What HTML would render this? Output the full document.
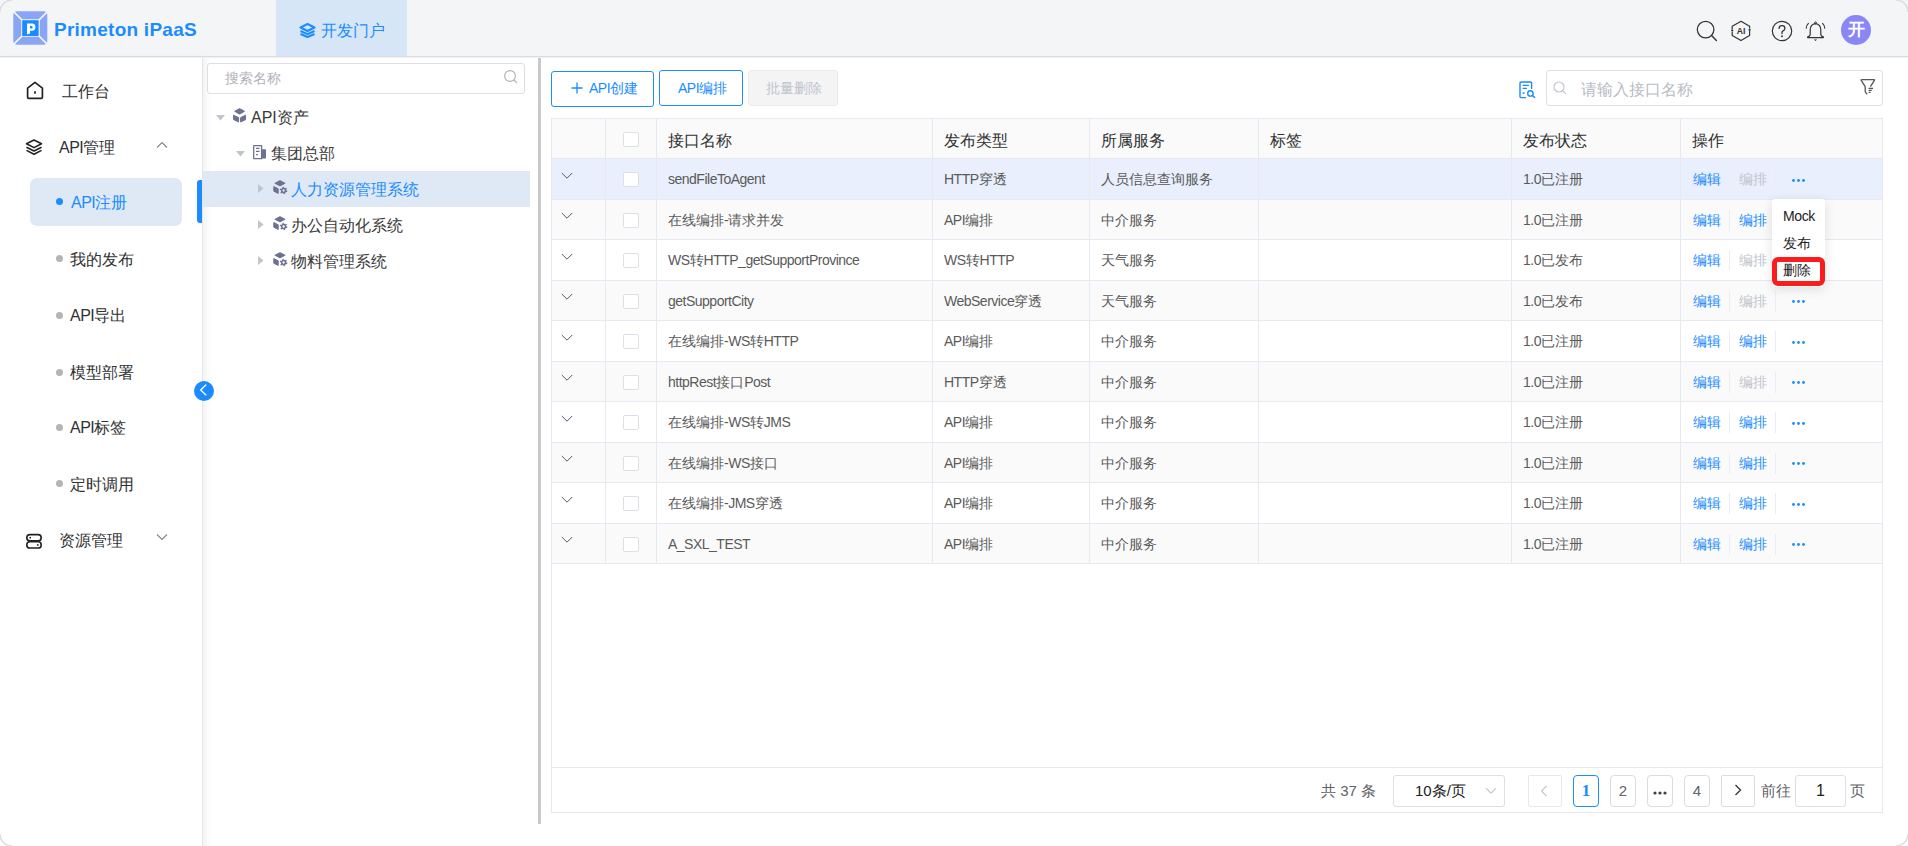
<!DOCTYPE html>
<html><head><meta charset="utf-8">
<style>
*{box-sizing:border-box;margin:0;padding:0}
html,body{width:1908px;height:846px;overflow:hidden;background:#fff}
body{font-family:"Liberation Sans",sans-serif;color:#333;position:relative}
.win{position:absolute;left:0;top:0;width:1908px;height:846px;background:#fff;overflow:hidden}
.winb{position:absolute;left:0;top:0;width:1908px;height:846px;border-radius:12px;border:1px solid #dedede;pointer-events:none}
.abs{position:absolute}
.t{position:absolute;white-space:nowrap;line-height:20px}
.hdr{position:absolute;left:0;top:0;width:1908px;height:57px;background:#f4f5f7;border-bottom:1px solid #dcdde0}
.brand{left:54px;top:20px;font-size:19px;font-weight:bold;color:#1a8cff;letter-spacing:0.25px;line-height:20px}
.tab{left:276px;top:0;width:131px;height:56px;background:#d6e6f7}
.side{left:0;top:57px;width:203px;height:789px;background:#fff;border-right:1px solid #e4e4e4;box-shadow:2px 0 5px rgba(0,0,0,0.04)}
.m16{font-size:16px;color:#303133}
.s15{font-size:16px;color:#303133}
.dot{position:absolute;width:7px;height:7px;border-radius:50%;background:#b4b4b4}
.tree{left:203px;top:57px;width:334px;height:789px;background:#fff}
.split{left:538px;top:58px;width:3px;height:766px;background:#c9c9c9}
.inp{position:absolute;border:1px solid #dcdfe6;border-radius:3px;background:#fff}
.ph{color:#b0b3b9}
.btn{position:absolute;border:1px solid #1a8cff;border-radius:3px;color:#1a8cff;font-size:14px;text-align:center;background:#fff}
.tbl{position:absolute;left:551px;top:118px;width:1332px;height:695px;border:1px solid #e6e9f2}
.row{position:absolute;left:552px;width:1330px;border-top:1px solid #e6e9f2}
.vl{position:absolute;width:1px;background:#e6e9f2}
.cell{position:absolute;white-space:nowrap;font-size:14px;color:#5a5a5a;line-height:20px}
.hd{position:absolute;white-space:nowrap;font-size:16px;color:#303133;line-height:20px}
.cb{position:absolute;left:623px;width:16px;height:15px;border:1px solid #dcdfe6;border-radius:2px;background:#fff}
.chev{position:absolute;left:561px}
.lk{position:absolute;white-space:nowrap;font-size:14px;color:#1a8cff;line-height:20px}
.lkd{color:#c0c4cc}
.sep{position:absolute;width:1px;height:21px;background:#ebedf2}
.dots{position:absolute;left:1792px;width:13px;height:3px}
.pg{position:absolute;border:1px solid #dcdcdc;border-radius:4px;background:#fff;font-size:15px;color:#606266;text-align:center}
.n{letter-spacing:-0.5px}
</style></head>
<body>
<div class="win">
  <div class="hdr"></div>
  <svg class="abs" style="left:13px;top:11px" width="35" height="34" viewBox="0 0 35 34">
    <rect x="0.3" y="0.3" width="34" height="33.4" rx="4" fill="#8aa5f5"/>
    <path d="M0 0 L10 10 M35 0 L25 10 M0 34 L10 24 M35 34 L25 24" stroke="#f4f5f7" stroke-width="1.7"/>
    <rect x="8.2" y="8.2" width="18.6" height="17.6" fill="#f4f5f7"/>
    <rect x="9.2" y="9.2" width="16.4" height="15.8" fill="#1a8cff"/>
    <path d="M14 23.4 V12.4 H19.2 Q22.4 12.4 22.4 16.1 Q22.4 19.8 19.2 19.8 H17 V22.4 Z M17 15 V17.4 H18.6 Q19.6 17.4 19.6 16.2 Q19.6 15 18.6 15 Z" fill="#fff"/>
  </svg>
  <div class="t brand">Primeton iPaaS</div>
  <div class="abs tab"></div>
  <svg class="abs" style="left:299px;top:23px" width="17" height="15" viewBox="0 0 17 15">
    <path d="M8.5 1 L15.5 4.5 L8.5 8 L1.5 4.5 Z" fill="none" stroke="#1a8cff" stroke-width="2" stroke-linejoin="round"/>
    <path d="M1.5 8 L8.5 11.2 L15.5 8" fill="none" stroke="#1a8cff" stroke-width="2" stroke-linejoin="round"/>
    <path d="M1.5 11 L8.5 14 L15.5 11" fill="none" stroke="#1a8cff" stroke-width="2" stroke-linejoin="round"/>
  </svg>
  <div class="t" style="left:321px;top:21px;font-size:16px;color:#1a8cff">开发门户</div>

  <!-- header right icons -->
  <svg class="abs" style="left:1695px;top:19px" width="24" height="24" viewBox="0 0 24 24">
    <circle cx="10.6" cy="10.6" r="8.3" fill="none" stroke="#333" stroke-width="1.25"/>
    <path d="M16.6 16.6 L21.4 21.4" stroke="#333" stroke-width="1.4" stroke-linecap="round"/>
  </svg>
  <svg class="abs" style="left:1730px;top:20px" width="22" height="22" viewBox="0 0 22 22">
    <path d="M2.2 12 V15.6 L11 20.6 L19.6 15.6 V11 M19.6 8.6 V6.3 L11 1.3 L2.2 6.3 V9.4" fill="none" stroke="#333" stroke-width="1.2" stroke-linejoin="round"/>
    <circle cx="2.2" cy="10.6" r="1.1" fill="#333"/><circle cx="19.6" cy="9.8" r="1.1" fill="#333"/>
    <text x="11" y="14" font-size="8.6" font-weight="bold" fill="#333" text-anchor="middle" font-family="Liberation Sans">AI</text>
  </svg>
  <svg class="abs" style="left:1771px;top:20px" width="22" height="22" viewBox="0 0 22 22">
    <circle cx="11" cy="11" r="9.7" fill="none" stroke="#333" stroke-width="1.2"/>
    <path d="M8.1 8.4 Q8.1 5.6 11 5.6 Q13.9 5.6 13.9 8.3 Q13.9 10.1 12 10.9 Q11 11.4 11 12.8 V13.6" fill="none" stroke="#333" stroke-width="1.3" stroke-linecap="round"/>
    <circle cx="11" cy="16.2" r="0.95" fill="#333"/>
  </svg>
  <svg class="abs" style="left:1804px;top:20px" width="23" height="23" viewBox="0 0 23 23">
    <circle cx="11.5" cy="2.8" r="0.9" fill="none" stroke="#333" stroke-width="1"/>
    <path d="M11.5 3.6 Q16.8 4.2 16.8 10.2 V14.6 Q17 16.2 19.2 16.8 Q19.6 17 19.4 17.6 H3.6 Q3.4 17 3.8 16.8 Q6 16.2 6.2 14.6 V10.2 Q6.2 4.2 11.5 3.6 Z" fill="none" stroke="#333" stroke-width="1.2" stroke-linejoin="round"/>
    <path d="M9.9 19.4 H13.1 L11.5 20.9 Z" fill="#333"/>
    <path d="M4.4 3.4 Q2.2 5.6 2.2 8.2" fill="none" stroke="#333" stroke-width="1.1" stroke-linecap="round"/>
    <path d="M18.6 3.4 Q20.8 5.6 20.8 8.2" fill="none" stroke="#333" stroke-width="1.1" stroke-linecap="round"/>
  </svg>
  <div class="abs" style="left:1841px;top:15px;width:30px;height:30px;border-radius:50%;background:#8a86f5"></div>
  <div class="t" style="left:1841px;top:20px;width:30px;text-align:center;font-size:17px;font-weight:bold;color:#fff">开</div>

  <!-- sidebar -->
  <div class="abs side"></div>
  
  <svg class="abs" style="left:26px;top:81px" width="18" height="19" viewBox="0 0 18 19">
    <path d="M1.6 7.2 L9 1.4 L16.4 7.2 V16.2 Q16.4 17.4 15.2 17.4 H2.8 Q1.6 17.4 1.6 16.2 Z" fill="none" stroke="#222" stroke-width="1.7" stroke-linejoin="round"/>
    <path d="M9 10.2 V12.8" stroke="#222" stroke-width="1.7"/>
  </svg>
  <div class="t m16" style="left:62px;top:81.5px">工作台</div>
  <svg class="abs" style="left:25px;top:139px" width="18" height="16" viewBox="0 0 18 16">
    <path d="M9 1 L16.5 4.8 L9 8.6 L1.5 4.8 Z" fill="none" stroke="#222" stroke-width="1.6" stroke-linejoin="round"/>
    <path d="M1.5 8.2 L9 12 L16.5 8.2" fill="none" stroke="#222" stroke-width="1.6" stroke-linejoin="round"/>
    <path d="M1.5 11.4 L9 15.2 L16.5 11.4" fill="none" stroke="#222" stroke-width="1.6" stroke-linejoin="round"/>
  </svg>
  <div class="t m16" style="left:59px;top:137.5px"><span class="n">API</span>管理</div>
  <svg class="abs" style="left:156px;top:141px" width="12" height="8" viewBox="0 0 12 8">
    <path d="M1 6.5 L6 1.5 L11 6.5" fill="none" stroke="#888" stroke-width="1.2"/>
  </svg>
  <div class="abs" style="left:30px;top:178px;width:152px;height:48px;border-radius:7px;background:#dfe9f6"></div>
  <div class="dot" style="left:56px;top:198px;background:#1a8cff"></div>
  <div class="t s15" style="left:71px;top:193px;color:#1a8cff"><span class="n">API</span>注册</div>
  <div class="abs" style="left:197px;top:180px;width:5px;height:43px;border-radius:3px 0 0 3px;background:#1a8cff"></div>
  <div class="dot" style="left:56px;top:254.5px"></div>
  <div class="t s15" style="left:70px;top:249.5px">我的发布</div>
  <div class="dot" style="left:56px;top:311.5px"></div>
  <div class="t s15" style="left:70px;top:305.5px"><span class="n">API</span>导出</div>
  <div class="dot" style="left:56px;top:368.5px"></div>
  <div class="t s15" style="left:70px;top:363px">模型部署</div>
  <div class="dot" style="left:56px;top:424px"></div>
  <div class="t s15" style="left:70px;top:418.3px"><span class="n">API</span>标签</div>
  <div class="dot" style="left:56px;top:480px"></div>
  <div class="t s15" style="left:70px;top:474.7px">定时调用</div>

  <svg class="abs" style="left:25px;top:533px" width="18" height="17" viewBox="0 0 18 17">
    <rect x="1.8" y="1.6" width="14.4" height="6.2" rx="3.1" fill="none" stroke="#222" stroke-width="1.6"/>
    <rect x="1.8" y="8.8" width="14.4" height="6.2" rx="3.1" fill="none" stroke="#222" stroke-width="1.6"/>
    <circle cx="5.2" cy="4.7" r="0.9" fill="#222"/><circle cx="12.8" cy="11.9" r="0.9" fill="#222"/>
  </svg>
  <div class="t m16" style="left:59px;top:531px">资源管理</div>
  <svg class="abs" style="left:156px;top:533px" width="12" height="8" viewBox="0 0 12 8">
    <path d="M1 1.5 L6 6.5 L11 1.5" fill="none" stroke="#888" stroke-width="1.2"/>
  </svg>

  <!-- tree -->
  <div class="abs tree"></div>
  <div class="abs" style="left:203px;top:57px;width:8px;height:789px;background:linear-gradient(to right,#f4f4f4,#fff)"></div>
  
  <div class="inp" style="left:207px;top:63px;width:318px;height:31px"></div>
  <div class="t ph" style="left:225px;top:68px;font-size:14px">搜索名称</div>
  <svg class="abs" style="left:503px;top:69px" width="16" height="16" viewBox="0 0 16 16">
    <circle cx="7" cy="7" r="5.4" fill="none" stroke="#b0b3b9" stroke-width="1.2"/>
    <path d="M11 11 L13.6 13.6" stroke="#b0b3b9" stroke-width="1.2" stroke-linecap="round"/>
  </svg>
  <svg class="abs" style="left:216px;top:115px" width="9" height="6" viewBox="0 0 9 6"><path d="M0 0 H9 L4.5 5.5 Z" fill="#c0c4cc"/></svg>
  <svg class="abs" style="left:233px;top:108px" width="14" height="15" viewBox="0 0 14 15"><path d="M6.6 0.8 L11.2 3.3 L6.6 5.9 L2 3.3 Z" fill="#6e7191" stroke="#6e7191" stroke-width="1.3" stroke-linejoin="round"/><path d="M0.6 7.2 L5.6 9.6 V14 L0.6 11.6 Z" fill="#6e7191" stroke="#6e7191" stroke-width="1" stroke-linejoin="round"/><path d="M12.6 7.2 L7.6 9.6 V14 L12.6 11.6 Z" fill="#6e7191" stroke="#6e7191" stroke-width="1" stroke-linejoin="round"/></svg>
  <div class="t" style="left:251px;top:108px;font-size:16px;color:#3a3a3a">API资产</div>
  <svg class="abs" style="left:236px;top:151px" width="9" height="6" viewBox="0 0 9 6"><path d="M0 0 H9 L4.5 5.5 Z" fill="#c0c4cc"/></svg>
  <svg class="abs" style="left:253px;top:145px" width="14" height="15" viewBox="0 0 14 15"><path d="M1.2 0.7 H8.6 V13.6 H1.2 Q0.7 13.6 0.7 13.1 V1.2 Q0.7 0.7 1.2 0.7 Z" fill="none" stroke="#6e7191" stroke-width="1.3"/><path d="M8.6 4.2 H12.4 Q13 4.2 13 4.8 V13 Q13 13.6 12.4 13.6 H8.6 Z" fill="#6e7191"/><path d="M3 3.4 H6.6 M3 6.4 H6.6 M3 9.6 H4.8" stroke="#6e7191" stroke-width="1.3"/></svg>
  <div class="t" style="left:271px;top:144px;font-size:16px;color:#3a3a3a">集团总部</div>
  <div class="abs" style="left:203px;top:171px;width:327px;height:36px;background:#dfe9f6"></div>
  <svg class="abs" style="left:258px;top:183.5px" width="6" height="9" viewBox="0 0 6 9"><path d="M0 0 V9 L5.5 4.5 Z" fill="#c0c4cc"/></svg>
  <svg class="abs" style="left:273px;top:179.7px" width="15" height="15" viewBox="0 0 15 15"><path d="M7 0.8 L11.8 3.2 L7 5.8 L2.2 3.2 Z" fill="#6e7191" stroke="#6e7191" stroke-width="1.1" stroke-linejoin="round"/><path d="M0.8 6.6 L5.2 8.8 V13.4 L0.8 11.2 Z" fill="#6e7191" stroke="#6e7191" stroke-width="1" stroke-linejoin="round"/><circle cx="10.6" cy="10.5" r="1.9" fill="none" stroke="#6e7191" stroke-width="1.5"/><circle cx="10.6" cy="10.5" r="3.1" fill="none" stroke="#6e7191" stroke-width="1.3" stroke-dasharray="1.5 1.75"/></svg>
  <div class="t" style="left:291px;top:180px;font-size:16px;color:#1a8cff">人力资源管理系统</div>
  <svg class="abs" style="left:258px;top:219.5px" width="6" height="9" viewBox="0 0 6 9"><path d="M0 0 V9 L5.5 4.5 Z" fill="#c0c4cc"/></svg>
  <svg class="abs" style="left:273px;top:215.7px" width="15" height="15" viewBox="0 0 15 15"><path d="M7 0.8 L11.8 3.2 L7 5.8 L2.2 3.2 Z" fill="#6e7191" stroke="#6e7191" stroke-width="1.1" stroke-linejoin="round"/><path d="M0.8 6.6 L5.2 8.8 V13.4 L0.8 11.2 Z" fill="#6e7191" stroke="#6e7191" stroke-width="1" stroke-linejoin="round"/><circle cx="10.6" cy="10.5" r="1.9" fill="none" stroke="#6e7191" stroke-width="1.5"/><circle cx="10.6" cy="10.5" r="3.1" fill="none" stroke="#6e7191" stroke-width="1.3" stroke-dasharray="1.5 1.75"/></svg>
  <div class="t" style="left:291px;top:216px;font-size:16px;color:#3a3a3a">办公自动化系统</div>
  <svg class="abs" style="left:258px;top:255.5px" width="6" height="9" viewBox="0 0 6 9"><path d="M0 0 V9 L5.5 4.5 Z" fill="#c0c4cc"/></svg>
  <svg class="abs" style="left:273px;top:251.7px" width="15" height="15" viewBox="0 0 15 15"><path d="M7 0.8 L11.8 3.2 L7 5.8 L2.2 3.2 Z" fill="#6e7191" stroke="#6e7191" stroke-width="1.1" stroke-linejoin="round"/><path d="M0.8 6.6 L5.2 8.8 V13.4 L0.8 11.2 Z" fill="#6e7191" stroke="#6e7191" stroke-width="1" stroke-linejoin="round"/><circle cx="10.6" cy="10.5" r="1.9" fill="none" stroke="#6e7191" stroke-width="1.5"/><circle cx="10.6" cy="10.5" r="3.1" fill="none" stroke="#6e7191" stroke-width="1.3" stroke-dasharray="1.5 1.75"/></svg>
  <div class="t" style="left:291px;top:252px;font-size:16px;color:#3a3a3a">物料管理系统</div>

  <div class="abs split"></div>
  <div class="abs" style="left:0;top:57px;width:1908px;height:1px;background:#eef0f5"></div>
  <div class="abs" style="left:194px;top:381px;width:20px;height:20px;border-radius:50%;background:#1a8cff"></div>
  <svg class="abs" style="left:194px;top:381px" width="20" height="20" viewBox="0 0 20 20">
    <path d="M11.8 3.9 L6.7 8.9 L11.9 13.9" fill="none" stroke="#fff" stroke-width="1.35" stroke-linecap="round" stroke-linejoin="round"/>
  </svg>




  
  <!-- toolbar -->
  <div class="btn" style="left:551px;top:71px;width:103px;height:36px"></div>
  <svg class="abs" style="left:571px;top:82px" width="12" height="12" viewBox="0 0 12 12"><path d="M6 0.5 V11.5 M0.5 6 H11.5" stroke="#1a8cff" stroke-width="1.3"/></svg>
  <div class="t" style="left:589px;top:78px;font-size:14px;color:#1a8cff"><span class="n">API</span>创建</div>
  <div class="btn" style="left:659px;top:70px;width:84px;height:36px"></div>
  <div class="t" style="left:678px;top:78px;font-size:14px;color:#1a8cff"><span class="n">API</span>编排</div>
  <div class="abs" style="left:748px;top:70px;width:90px;height:36px;background:#f4f4f5;border:1px solid #ebebec;border-radius:3px"></div>
  <div class="t" style="left:766px;top:78px;font-size:14px;color:#c0c4cc">批量删除</div>

  <svg class="abs" style="left:1519px;top:81px" width="17" height="18" viewBox="0 0 17 18">
    <path d="M12.6 8 V2.2 Q12.6 1 11.4 1 H2.2 Q1 1 1 2.2 V15.4 Q1 16.6 2.2 16.6 H7" fill="none" stroke="#1a8cff" stroke-width="1.4"/>
    <path d="M3.6 4.4 H10 M3.6 7.4 H8 M3.6 12 H5.6" stroke="#1a8cff" stroke-width="1.3"/>
    <circle cx="11.4" cy="12.4" r="2.7" fill="none" stroke="#1a8cff" stroke-width="1.4"/>
    <path d="M13.4 14.4 L15.6 16.6" stroke="#1a8cff" stroke-width="1.4" stroke-linecap="round"/>
  </svg>
  <div class="inp" style="left:1546px;top:70px;width:337px;height:36px;border-color:#dcdfe6"></div>
  <svg class="abs" style="left:1553px;top:81px" width="14" height="14" viewBox="0 0 14 14">
    <circle cx="6" cy="6" r="5" fill="none" stroke="#c0c4cc" stroke-width="1.2"/>
    <path d="M9.6 9.6 L12.6 12.6" stroke="#c0c4cc" stroke-width="1.2" stroke-linecap="round"/>
  </svg>
  <div class="t ph" style="left:1581px;top:80px;font-size:16px;color:#b8bcc4">请输入接口名称</div>
  <svg class="abs" style="left:1860px;top:78px" width="16" height="18" viewBox="0 0 16 18">
    <path d="M1.5 1.6 H14 Q14.8 1.6 14.4 2.4 L10.4 8.6" fill="none" stroke="#555" stroke-width="1.3" stroke-linejoin="round"/>
    <path d="M1.5 1.6 Q0.7 1.6 1.2 2.4 L5.2 8.6 V13.4 Q5.2 14.2 7.2 16.2" fill="none" stroke="#555" stroke-width="1.3" stroke-linejoin="round"/>
    <path d="M8.6 10.4 H13 M8.6 12.4 H11.8 M8.6 14.4 H10.6" stroke="#555" stroke-width="1.1"/>
  </svg>

  <!-- table -->
  <div class="tbl"></div>
  <div class="abs" style="left:552px;top:119px;width:1330px;height:39px;background:#fafafa"></div>
  <div class="row" style="top:158.0px;height:41.5px;background:#e9effc"></div>
  <svg class="chev" style="top:171.55px" width="12" height="8" viewBox="0 0 12 8"><path d="M0.8 1 L6 6.2 L11.2 1" fill="none" stroke="#4a5066" stroke-width="0.95"/></svg>
  <div class="cb" style="top:172.25px"></div>
  <div class="cell" style="left:668px;top:169.25px"><span class="n">sendFileToAgent</span></div>
  <div class="cell" style="left:944px;top:169.25px"><span class="n">HTTP</span>穿透</div>
  <div class="cell" style="left:1101px;top:169.25px">人员信息查询服务</div>
  <div class="cell" style="left:1523px;top:169.25px"><span class="n">1.0</span>已注册</div>
  <div class="lk" style="left:1693px;top:169.25px">编辑</div>
  <div class="sep" style="left:1729px;top:169.25px"></div>
  <div class="lk lkd" style="left:1739px;top:169.25px">编排</div>
  <div class="sep" style="left:1775px;top:169.25px"></div>
  <svg class="dots" style="top:178.75px" width="13" height="3" viewBox="0 0 13 3"><circle cx="1.5" cy="1.5" r="1.4" fill="#1a8cff"/><circle cx="6.5" cy="1.5" r="1.4" fill="#1a8cff"/><circle cx="11.5" cy="1.5" r="1.4" fill="#1a8cff"/></svg>
  <div class="row" style="top:198.5px;height:41.5px;background:#fafafa"></div>
  <svg class="chev" style="top:212.05px" width="12" height="8" viewBox="0 0 12 8"><path d="M0.8 1 L6 6.2 L11.2 1" fill="none" stroke="#4a5066" stroke-width="0.95"/></svg>
  <div class="cb" style="top:212.75px"></div>
  <div class="cell" style="left:668px;top:209.75px">在线编排<span class="n">-</span>请求并发</div>
  <div class="cell" style="left:944px;top:209.75px"><span class="n">API</span>编排</div>
  <div class="cell" style="left:1101px;top:209.75px">中介服务</div>
  <div class="cell" style="left:1523px;top:209.75px"><span class="n">1.0</span>已注册</div>
  <div class="lk" style="left:1693px;top:209.75px">编辑</div>
  <div class="sep" style="left:1729px;top:209.75px"></div>
  <div class="lk" style="left:1739px;top:209.75px">编排</div>
  <div class="sep" style="left:1775px;top:209.75px"></div>
  <svg class="dots" style="top:219.25px" width="13" height="3" viewBox="0 0 13 3"><circle cx="1.5" cy="1.5" r="1.4" fill="#1a8cff"/><circle cx="6.5" cy="1.5" r="1.4" fill="#1a8cff"/><circle cx="11.5" cy="1.5" r="1.4" fill="#1a8cff"/></svg>
  <div class="row" style="top:239.0px;height:41.5px;background:#fff"></div>
  <svg class="chev" style="top:252.55px" width="12" height="8" viewBox="0 0 12 8"><path d="M0.8 1 L6 6.2 L11.2 1" fill="none" stroke="#4a5066" stroke-width="0.95"/></svg>
  <div class="cb" style="top:253.25px"></div>
  <div class="cell" style="left:668px;top:250.25px"><span class="n">WS</span>转<span class="n">HTTP_getSupportProvince</span></div>
  <div class="cell" style="left:944px;top:250.25px"><span class="n">WS</span>转<span class="n">HTTP</span></div>
  <div class="cell" style="left:1101px;top:250.25px">天气服务</div>
  <div class="cell" style="left:1523px;top:250.25px"><span class="n">1.0</span>已发布</div>
  <div class="lk" style="left:1693px;top:250.25px">编辑</div>
  <div class="sep" style="left:1729px;top:250.25px"></div>
  <div class="lk lkd" style="left:1739px;top:250.25px">编排</div>
  <div class="sep" style="left:1775px;top:250.25px"></div>
  <svg class="dots" style="top:259.75px" width="13" height="3" viewBox="0 0 13 3"><circle cx="1.5" cy="1.5" r="1.4" fill="#1a8cff"/><circle cx="6.5" cy="1.5" r="1.4" fill="#1a8cff"/><circle cx="11.5" cy="1.5" r="1.4" fill="#1a8cff"/></svg>
  <div class="row" style="top:279.5px;height:41.5px;background:#fafafa"></div>
  <svg class="chev" style="top:293.05px" width="12" height="8" viewBox="0 0 12 8"><path d="M0.8 1 L6 6.2 L11.2 1" fill="none" stroke="#4a5066" stroke-width="0.95"/></svg>
  <div class="cb" style="top:293.75px"></div>
  <div class="cell" style="left:668px;top:290.75px"><span class="n">getSupportCity</span></div>
  <div class="cell" style="left:944px;top:290.75px"><span class="n">WebService</span>穿透</div>
  <div class="cell" style="left:1101px;top:290.75px">天气服务</div>
  <div class="cell" style="left:1523px;top:290.75px"><span class="n">1.0</span>已发布</div>
  <div class="lk" style="left:1693px;top:290.75px">编辑</div>
  <div class="sep" style="left:1729px;top:290.75px"></div>
  <div class="lk lkd" style="left:1739px;top:290.75px">编排</div>
  <div class="sep" style="left:1775px;top:290.75px"></div>
  <svg class="dots" style="top:300.25px" width="13" height="3" viewBox="0 0 13 3"><circle cx="1.5" cy="1.5" r="1.4" fill="#1a8cff"/><circle cx="6.5" cy="1.5" r="1.4" fill="#1a8cff"/><circle cx="11.5" cy="1.5" r="1.4" fill="#1a8cff"/></svg>
  <div class="row" style="top:320.0px;height:41.5px;background:#fff"></div>
  <svg class="chev" style="top:333.55px" width="12" height="8" viewBox="0 0 12 8"><path d="M0.8 1 L6 6.2 L11.2 1" fill="none" stroke="#4a5066" stroke-width="0.95"/></svg>
  <div class="cb" style="top:334.25px"></div>
  <div class="cell" style="left:668px;top:331.25px">在线编排<span class="n">-WS</span>转<span class="n">HTTP</span></div>
  <div class="cell" style="left:944px;top:331.25px"><span class="n">API</span>编排</div>
  <div class="cell" style="left:1101px;top:331.25px">中介服务</div>
  <div class="cell" style="left:1523px;top:331.25px"><span class="n">1.0</span>已注册</div>
  <div class="lk" style="left:1693px;top:331.25px">编辑</div>
  <div class="sep" style="left:1729px;top:331.25px"></div>
  <div class="lk" style="left:1739px;top:331.25px">编排</div>
  <div class="sep" style="left:1775px;top:331.25px"></div>
  <svg class="dots" style="top:340.75px" width="13" height="3" viewBox="0 0 13 3"><circle cx="1.5" cy="1.5" r="1.4" fill="#1a8cff"/><circle cx="6.5" cy="1.5" r="1.4" fill="#1a8cff"/><circle cx="11.5" cy="1.5" r="1.4" fill="#1a8cff"/></svg>
  <div class="row" style="top:360.5px;height:41.5px;background:#fafafa"></div>
  <svg class="chev" style="top:374.05px" width="12" height="8" viewBox="0 0 12 8"><path d="M0.8 1 L6 6.2 L11.2 1" fill="none" stroke="#4a5066" stroke-width="0.95"/></svg>
  <div class="cb" style="top:374.75px"></div>
  <div class="cell" style="left:668px;top:371.75px"><span class="n">httpRest</span>接口<span class="n">Post</span></div>
  <div class="cell" style="left:944px;top:371.75px"><span class="n">HTTP</span>穿透</div>
  <div class="cell" style="left:1101px;top:371.75px">中介服务</div>
  <div class="cell" style="left:1523px;top:371.75px"><span class="n">1.0</span>已注册</div>
  <div class="lk" style="left:1693px;top:371.75px">编辑</div>
  <div class="sep" style="left:1729px;top:371.75px"></div>
  <div class="lk lkd" style="left:1739px;top:371.75px">编排</div>
  <div class="sep" style="left:1775px;top:371.75px"></div>
  <svg class="dots" style="top:381.25px" width="13" height="3" viewBox="0 0 13 3"><circle cx="1.5" cy="1.5" r="1.4" fill="#1a8cff"/><circle cx="6.5" cy="1.5" r="1.4" fill="#1a8cff"/><circle cx="11.5" cy="1.5" r="1.4" fill="#1a8cff"/></svg>
  <div class="row" style="top:401.0px;height:41.5px;background:#fff"></div>
  <svg class="chev" style="top:414.55px" width="12" height="8" viewBox="0 0 12 8"><path d="M0.8 1 L6 6.2 L11.2 1" fill="none" stroke="#4a5066" stroke-width="0.95"/></svg>
  <div class="cb" style="top:415.25px"></div>
  <div class="cell" style="left:668px;top:412.25px">在线编排<span class="n">-WS</span>转<span class="n">JMS</span></div>
  <div class="cell" style="left:944px;top:412.25px"><span class="n">API</span>编排</div>
  <div class="cell" style="left:1101px;top:412.25px">中介服务</div>
  <div class="cell" style="left:1523px;top:412.25px"><span class="n">1.0</span>已注册</div>
  <div class="lk" style="left:1693px;top:412.25px">编辑</div>
  <div class="sep" style="left:1729px;top:412.25px"></div>
  <div class="lk" style="left:1739px;top:412.25px">编排</div>
  <div class="sep" style="left:1775px;top:412.25px"></div>
  <svg class="dots" style="top:421.75px" width="13" height="3" viewBox="0 0 13 3"><circle cx="1.5" cy="1.5" r="1.4" fill="#1a8cff"/><circle cx="6.5" cy="1.5" r="1.4" fill="#1a8cff"/><circle cx="11.5" cy="1.5" r="1.4" fill="#1a8cff"/></svg>
  <div class="row" style="top:441.5px;height:41.5px;background:#fafafa"></div>
  <svg class="chev" style="top:455.05px" width="12" height="8" viewBox="0 0 12 8"><path d="M0.8 1 L6 6.2 L11.2 1" fill="none" stroke="#4a5066" stroke-width="0.95"/></svg>
  <div class="cb" style="top:455.75px"></div>
  <div class="cell" style="left:668px;top:452.75px">在线编排<span class="n">-WS</span>接口</div>
  <div class="cell" style="left:944px;top:452.75px"><span class="n">API</span>编排</div>
  <div class="cell" style="left:1101px;top:452.75px">中介服务</div>
  <div class="cell" style="left:1523px;top:452.75px"><span class="n">1.0</span>已注册</div>
  <div class="lk" style="left:1693px;top:452.75px">编辑</div>
  <div class="sep" style="left:1729px;top:452.75px"></div>
  <div class="lk" style="left:1739px;top:452.75px">编排</div>
  <div class="sep" style="left:1775px;top:452.75px"></div>
  <svg class="dots" style="top:462.25px" width="13" height="3" viewBox="0 0 13 3"><circle cx="1.5" cy="1.5" r="1.4" fill="#1a8cff"/><circle cx="6.5" cy="1.5" r="1.4" fill="#1a8cff"/><circle cx="11.5" cy="1.5" r="1.4" fill="#1a8cff"/></svg>
  <div class="row" style="top:482.0px;height:41.5px;background:#fff"></div>
  <svg class="chev" style="top:495.55px" width="12" height="8" viewBox="0 0 12 8"><path d="M0.8 1 L6 6.2 L11.2 1" fill="none" stroke="#4a5066" stroke-width="0.95"/></svg>
  <div class="cb" style="top:496.25px"></div>
  <div class="cell" style="left:668px;top:493.25px">在线编排<span class="n">-JMS</span>穿透</div>
  <div class="cell" style="left:944px;top:493.25px"><span class="n">API</span>编排</div>
  <div class="cell" style="left:1101px;top:493.25px">中介服务</div>
  <div class="cell" style="left:1523px;top:493.25px"><span class="n">1.0</span>已注册</div>
  <div class="lk" style="left:1693px;top:493.25px">编辑</div>
  <div class="sep" style="left:1729px;top:493.25px"></div>
  <div class="lk" style="left:1739px;top:493.25px">编排</div>
  <div class="sep" style="left:1775px;top:493.25px"></div>
  <svg class="dots" style="top:502.75px" width="13" height="3" viewBox="0 0 13 3"><circle cx="1.5" cy="1.5" r="1.4" fill="#1a8cff"/><circle cx="6.5" cy="1.5" r="1.4" fill="#1a8cff"/><circle cx="11.5" cy="1.5" r="1.4" fill="#1a8cff"/></svg>
  <div class="row" style="top:522.5px;height:41.5px;background:#fafafa"></div>
  <svg class="chev" style="top:536.05px" width="12" height="8" viewBox="0 0 12 8"><path d="M0.8 1 L6 6.2 L11.2 1" fill="none" stroke="#4a5066" stroke-width="0.95"/></svg>
  <div class="cb" style="top:536.75px"></div>
  <div class="cell" style="left:668px;top:533.75px"><span class="n">A_SXL_TEST</span></div>
  <div class="cell" style="left:944px;top:533.75px"><span class="n">API</span>编排</div>
  <div class="cell" style="left:1101px;top:533.75px">中介服务</div>
  <div class="cell" style="left:1523px;top:533.75px"><span class="n">1.0</span>已注册</div>
  <div class="lk" style="left:1693px;top:533.75px">编辑</div>
  <div class="sep" style="left:1729px;top:533.75px"></div>
  <div class="lk" style="left:1739px;top:533.75px">编排</div>
  <div class="sep" style="left:1775px;top:533.75px"></div>
  <svg class="dots" style="top:543.25px" width="13" height="3" viewBox="0 0 13 3"><circle cx="1.5" cy="1.5" r="1.4" fill="#1a8cff"/><circle cx="6.5" cy="1.5" r="1.4" fill="#1a8cff"/><circle cx="11.5" cy="1.5" r="1.4" fill="#1a8cff"/></svg>
  <div class="row" style="top:563px;height:1px"></div>
  <div class="vl" style="left:605px;top:119px;height:444px"></div>
  <div class="vl" style="left:656px;top:119px;height:444px"></div>
  <div class="vl" style="left:932px;top:119px;height:444px"></div>
  <div class="vl" style="left:1089px;top:119px;height:444px"></div>
  <div class="vl" style="left:1258px;top:119px;height:444px"></div>
  <div class="vl" style="left:1511px;top:119px;height:444px"></div>
  <div class="vl" style="left:1680px;top:119px;height:444px"></div>

  <div class="cb" style="top:132px"></div>
  <div class="hd" style="left:668px;top:130.5px">接口名称</div>
  <div class="hd" style="left:944px;top:130.5px">发布类型</div>
  <div class="hd" style="left:1101px;top:130.5px">所属服务</div>
  <div class="hd" style="left:1270px;top:130.5px">标签</div>
  <div class="hd" style="left:1523px;top:130.5px">发布状态</div>
  <div class="hd" style="left:1692px;top:130.5px">操作</div>

  <!-- pagination -->
  <div class="row" style="top:767px;height:1px"></div>
  <div class="t" style="left:1321px;top:781px;font-size:15px;color:#606266">共 37 条</div>
  <div class="inp" style="left:1393px;top:775px;width:112px;height:32px;border-radius:3px"></div>
  <div class="t" style="left:1415px;top:781px;font-size:15px;color:#222">10条/页</div>
  <svg class="abs" style="left:1485px;top:787px" width="12" height="8" viewBox="0 0 12 8"><path d="M1 1.2 L6 6.2 L11 1.2" fill="none" stroke="#c0c4cc" stroke-width="1.1"/></svg>
  <div class="pg" style="left:1528px;top:775px;width:34px;height:32px;border-color:#e8e8ea;border-radius:2px"></div>
  <svg class="abs" style="left:1540px;top:785px" width="8" height="12" viewBox="0 0 8 12"><path d="M6.5 1 L1.5 6 L6.5 11" fill="none" stroke="#c8cbd1" stroke-width="1.3"/></svg>
  <div class="pg" style="left:1573px;top:775px;width:26px;height:32px;border-color:#1a8cff;line-height:30px;color:#1a8cff;font-weight:bold;font-size:17px;font-family:'Liberation Serif',serif">1</div>
  <div class="pg" style="left:1610px;top:775px;width:26px;height:32px;line-height:30px">2</div>
  <div class="pg" style="left:1647px;top:775px;width:26px;height:32px"></div>
  <svg class="abs" style="left:1653px;top:791px" width="14" height="4" viewBox="0 0 14 4"><circle cx="2" cy="2" r="1.6" fill="#404040"/><circle cx="7" cy="2" r="1.6" fill="#404040"/><circle cx="12" cy="2" r="1.6" fill="#404040"/></svg>
  <div class="pg" style="left:1684px;top:775px;width:26px;height:32px;line-height:30px">4</div>
  <div class="pg" style="left:1721px;top:775px;width:34px;height:32px;border-radius:2px"></div>
  <svg class="abs" style="left:1734px;top:784px" width="8" height="12" viewBox="0 0 8 12"><path d="M1.5 1 L6.5 6 L1.5 11" fill="none" stroke="#333" stroke-width="1.3"/></svg>
  <div class="t" style="left:1761px;top:781px;font-size:15px;color:#606266">前往</div>
  <div class="inp" style="left:1795px;top:775px;width:51px;height:32px;border-radius:3px"></div>
  <div class="t" style="left:1795px;top:781px;width:51px;text-align:center;font-size:16px;color:#222">1</div>
  <div class="t" style="left:1850px;top:781px;font-size:15px;color:#606266">页</div>

  <!-- popover -->
  <div class="abs" style="left:1772px;top:199px;width:53px;height:88px;background:#fff;border-radius:3px;box-shadow:0 2px 12px rgba(0,0,0,0.12)"></div>
  <div class="t" style="left:1783px;top:206px;font-size:14px;color:#222"><span class="n" style="letter-spacing:-0.4px">Mock</span></div>
  <div class="t" style="left:1783px;top:233px;font-size:14px;color:#222">发布</div>
  <div class="t" style="left:1783px;top:260px;font-size:14px;color:#222">删除</div>
  <div class="abs" style="left:1772px;top:257px;width:53px;height:29px;border:5px solid #fb1c1c;border-radius:6px"></div>


  <svg class="abs" style="left:0;top:0" width="1908" height="846" viewBox="0 0 1908 846">
    <path d="M0 12 A12 12 0 0 1 12 0" fill="none" stroke="#dcdcdc" stroke-width="1.5"/>
    <path d="M1896 0 A12 12 0 0 1 1908 12" fill="none" stroke="#dcdcdc" stroke-width="1.5"/>
    <path d="M0 834 A12 12 0 0 0 12 846" fill="none" stroke="#dcdcdc" stroke-width="1.5"/>
    <path d="M1896 846 A12 12 0 0 0 1908 834" fill="none" stroke="#dcdcdc" stroke-width="1.5"/>
  </svg>
</div>
</body></html>
